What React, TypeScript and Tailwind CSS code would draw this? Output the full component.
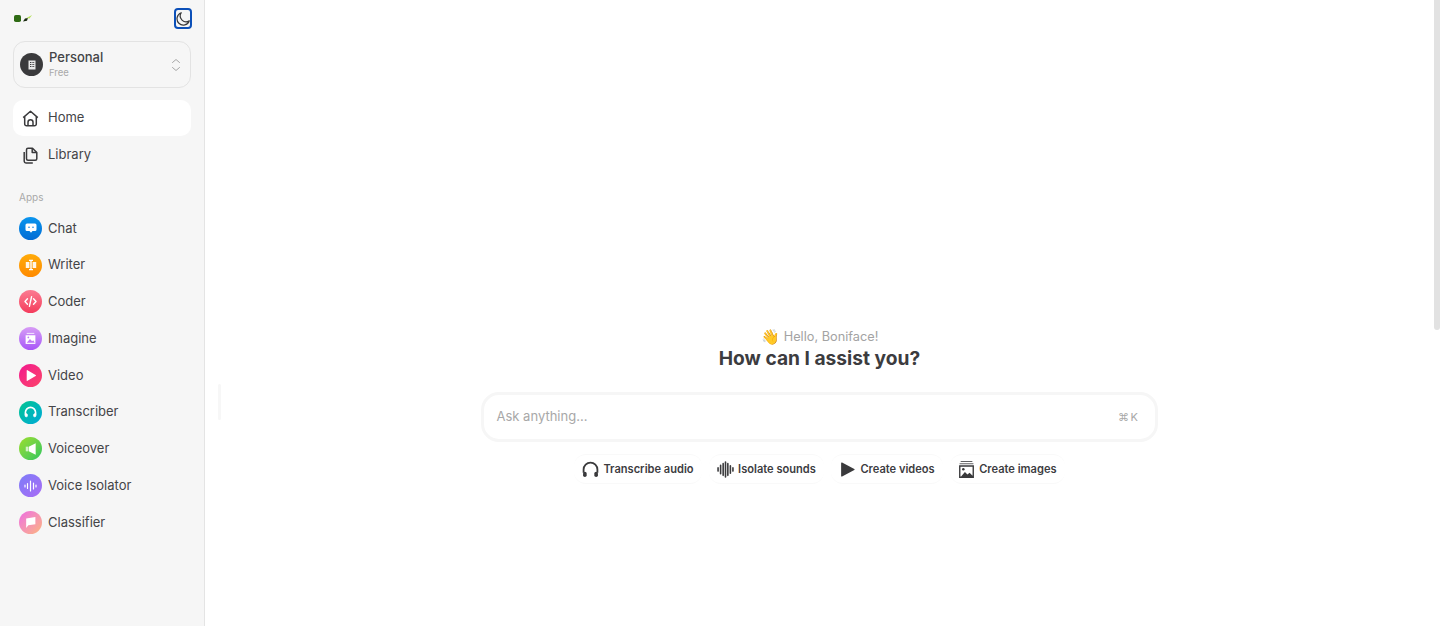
import React from 'react';

const apps: { name: string; bg: string; icon: React.ReactNode }[] = [
  {
    name: 'Chat',
    bg: 'bg-gradient-to-b from-[#0b95ee] to-[#046cd4]',
    icon: (
      <svg viewBox="0 0 12 12" className="h-[12px] w-[12px]">
        <path fill="#fff" d="M2 1.5h8A1.5 1.5 0 0 1 11.5 3v4.5A1.5 1.5 0 0 1 10 9H7.5L6 10.8 4.5 9H2A1.5 1.5 0 0 1 .5 7.5V3A1.5 1.5 0 0 1 2 1.5z" />
        <circle cx="4" cy="5.2" r=".8" fill="#0b80e0" />
        <circle cx="8" cy="5.2" r=".8" fill="#0b80e0" />
      </svg>
    ),
  },
  {
    name: 'Writer',
    bg: 'bg-gradient-to-b from-[#ffab0a] to-[#ff8a00]',
    icon: (
      <svg viewBox="0 0 12 12" className="h-[12px] w-[12px]">
        <path fill="#fff" opacity=".9" d="M.8 3h3.6v6H.8zM7.6 3h3.6v6H7.6z" />
        <path fill="#fff" d="M4 .8h4V2H6.7v8H8v1.2H4V10h1.3V2H4z" />
      </svg>
    ),
  },
  {
    name: 'Coder',
    bg: 'bg-gradient-to-b from-[#fb7a92] to-[#f43a5c]',
    icon: (
      <svg viewBox="0 0 12 12" className="h-[13px] w-[13px]" fill="none" stroke="#fff" strokeWidth="1.3" strokeLinecap="round" strokeLinejoin="round">
        <path d="M3.2 3.5.9 6l2.3 2.5M8.8 3.5 11.1 6 8.8 8.5M7 1.5 5 10.5" />
      </svg>
    ),
  },
  {
    name: 'Imagine',
    bg: 'bg-gradient-to-b from-[#d79bf5] to-[#a855f7]',
    icon: (
      <svg viewBox="0 0 12 12" className="h-[13px] w-[13px]">
        <path fill="#fff" opacity=".75" d="M2.5 .8h7v1h-7z" />
        <path fill="#fff" d="M1.5 3h9v8h-9z" />
        <path fill="#c07cf5" d="M2.5 10 5.5 6.5 7.5 8.5 8.5 7.5 10 10z" />
        <circle cx="4" cy="5" r=".8" fill="#c07cf5" />
      </svg>
    ),
  },
  {
    name: 'Video',
    bg: 'bg-gradient-to-br from-[#f2108e] to-[#fd4268]',
    icon: (
      <svg viewBox="0 0 12 12" className="h-[13px] w-[13px]">
        <path fill="#fff" d="M2.5 1.5v9a.5.5 0 0 0 .75.43l7.5-4.5a.5.5 0 0 0 0-.86l-7.5-4.5a.5.5 0 0 0-.75.43z" />
      </svg>
    ),
  },
  {
    name: 'Transcriber',
    bg: 'bg-gradient-to-br from-[#0bc48e] to-[#08a9d8]',
    icon: (
      <svg viewBox="0 0 12 12" className="h-[13px] w-[13px]" fill="none" stroke="#fff" strokeWidth="1.5" strokeLinecap="round">
        <path d="M1.3 8V6a4.7 4.7 0 0 1 9.4 0v2" />
        <rect x="1" y="7.2" width="2.2" height="2.8" rx="1.1" fill="#fff" strokeWidth=".6" />
        <rect x="8.8" y="7.2" width="2.2" height="2.8" rx="1.1" fill="#fff" strokeWidth=".6" />
      </svg>
    ),
  },
  {
    name: 'Voiceover',
    bg: 'bg-gradient-to-br from-[#9ade28] to-[#1fc65c]',
    icon: (
      <svg viewBox="0 0 12 12" className="h-[14px] w-[14px]">
        <path fill="#fff" opacity=".7" d="M1.5 4h2v4h-2z" />
        <path fill="#fff" d="M4 4 10 1v10L4 8z" />
      </svg>
    ),
  },
  {
    name: 'Voice Isolator',
    bg: 'bg-gradient-to-br from-[#7c7cf8] to-[#a86bf5]',
    icon: (
      <svg viewBox="0 0 13 12" className="h-[12px] w-[13px]" stroke="#fff" strokeWidth="1.2" strokeLinecap="round">
        <path d="M1 5v2M3.5 3.5v5M6.5 1v10M9.5 3v6M12 5v2" />
      </svg>
    ),
  },
  {
    name: 'Classifier',
    bg: 'bg-gradient-to-br from-[#ee6ae0] to-[#fdb47a]',
    icon: (
      <svg viewBox="0 0 12 12" className="h-[13px] w-[13px]">
        <path fill="#fff" d="M2 2.2 10.5 1v6.5L4 8.5 2 11z" />
      </svg>
    ),
  },
];

const Sidebar: React.FC = () => (
  <aside className="flex h-[626px] w-[205px] shrink-0 flex-col border-r border-[#e4e4e4] bg-[#f6f6f6] pl-[13px] pr-[13px]">
    {/* Logo + theme toggle */}
    <div className="flex h-[41px] items-start justify-between pt-[8px]">
      <svg viewBox="0 0 18 7" className="ml-[1px] mt-[7px] h-[7px] w-[18px]">
        <rect x="0" y="0" width="7" height="7" rx="1.8" fill="#2f6b14" />
        <path d="M9 6.5 11 3.5l3-.5-1 2.8z" fill="#1a2a10" />
        <path d="M12.5 3 18 0l-2.5 3.5z" fill="#b4e05a" />
      </svg>
      <div className="-mr-[1px] flex h-[21px] w-[18px] items-center justify-center rounded-[4px] border-2 border-[#0b4fb8]">
        <svg viewBox="0 0 16 16" className="h-[16px] w-[15px]" fill="none" stroke="#3a3a3c" strokeWidth="1.4" strokeLinejoin="round">
          <path d="M6 .9A7.2 7.2 0 1 0 15.2 10 6.6 6.6 0 0 1 6 .9z" />
        </svg>
      </div>
    </div>

    {/* Workspace */}
    <div className="flex h-[47px] items-center gap-[6px] rounded-xl border border-[#e3e3e3] pl-[6px] pr-[9px]">
      <div className="flex h-[23px] w-[23px] items-center justify-center rounded-full bg-[#3a3a3c]">
        <svg viewBox="0 0 10 10" className="h-[10px] w-[10px]">
          <path fill="#e8e8e8" fillRule="evenodd" d="M1.5 .5h7v9h-7zM3 2v1h1V2zM4.6 2v1h1V2zM6.2 2v1h1V2zM3 4v1h1V4zM4.6 4v1h1V4zM6.2 4v1h1V4zM3 6v1h1V6zM4.6 6v1h1V6zM6.2 6v1h1V6z" />
        </svg>
      </div>
      <div className="flex flex-1 flex-col">
        <span className="text-[13px] font-medium leading-[14px] text-[#444447]">Personal</span>
        <span className="mt-[2px] text-[9.5px] leading-[13px] text-[#a9a9a9]">Free</span>
      </div>
      <svg viewBox="0 0 10 14" className="h-[14px] w-[10px]" fill="none" stroke="#a6a6a6" strokeWidth="1" strokeLinecap="round" strokeLinejoin="round">
        <path d="M1.5 4.5 5 1.5l3.5 3M1.5 9.5 5 12.5l3.5-3" />
      </svg>
    </div>

    {/* Main nav */}
    <nav className="mt-[12px] flex flex-col gap-[1px]">
      <div className="flex h-[36px] items-center gap-[9px] rounded-[10px] bg-white pl-[9px]">
        <svg viewBox="0 0 17 17" className="h-[17px] w-[17px]" fill="none" stroke="#3a3a3c" strokeWidth="1.5" strokeLinejoin="round">
          <path d="M1.2 7.6 8.5 1.2l7.3 6.4M2.7 6.4v7.6a1.8 1.8 0 0 0 1.8 1.8h8a1.8 1.8 0 0 0 1.8-1.8V6.4" />
          <path d="M6 15.8v-3.6a2.5 2.5 0 0 1 5 0v3.6" />
        </svg>
        <span className="text-[13px] text-[#444447]">Home</span>
      </div>
      <div className="flex h-[36px] items-center gap-[9px] pl-[9px]">
        <svg viewBox="0 0 17 17" className="h-[17px] w-[17px]" fill="none" stroke="#3a3a3c" strokeWidth="1.5" strokeLinejoin="round">
          <path d="M6 1.2h4.5l4.3 4.3v6.3a1.5 1.5 0 0 1-1.5 1.5H6a1.5 1.5 0 0 1-1.5-1.5V2.7A1.5 1.5 0 0 1 6 1.2z" />
          <path d="M10.2 1.4v4.2h4.4" />
          <path d="M2.2 5v9a2 2 0 0 0 2 2h6.6" />
        </svg>
        <span className="text-[13px] text-[#444447]">Library</span>
      </div>
    </nav>

    <div className="mt-[16px] pl-[6px] text-[10px] leading-[16px] text-[#a9a9a9]">Apps</div>

    {/* Apps */}
    <div className="mt-[5px] flex flex-col">
      {apps.map((app) => (
        <div key={app.name} className="flex h-[36.75px] items-center gap-[6px] pl-[6px]">
          <div className={`flex h-[23px] w-[23px] items-center justify-center rounded-full ${app.bg}`}>{app.icon}</div>
          <span className="text-[13px] text-[#444447]">{app.name}</span>
        </div>
      ))}
    </div>
  </aside>
);

const suggestions: { label: string; icon: React.ReactNode }[] = [
  {
    label: 'Transcribe audio',
    icon: (
      <svg viewBox="0 0 16 16" className="h-[17px] w-[17px]" fill="none" stroke="#3a3a3c" strokeWidth="1.7">
        <path d="M1.5 11V8a6.5 6.5 0 0 1 13 0v3" />
        <rect x="1" y="10" width="3.4" height="5" rx="1.7" fill="#3a3a3c" stroke="none" />
        <rect x="11.6" y="10" width="3.4" height="5" rx="1.7" fill="#3a3a3c" stroke="none" />
      </svg>
    ),
  },
  {
    label: 'Isolate sounds',
    icon: (
      <svg viewBox="0 0 16 16" className="h-[17px] w-[17px]" stroke="#3a3a3c" strokeWidth="1.5" strokeLinecap="round">
        <path d="M1 6.5v3M3.4 4v8M5.8 2.5v11M8 1v14M10.2 2.5v11M12.6 4.5v7M15 6.5v3" />
      </svg>
    ),
  },
  {
    label: 'Create videos',
    icon: (
      <svg viewBox="0 0 16 16" className="h-[17px] w-[17px]">
        <path fill="#3a3a3c" d="M2 2v12a.6.6 0 0 0 .9.5l11.5-6a.6.6 0 0 0 0-1L2.9 1.5A.6.6 0 0 0 2 2z" />
      </svg>
    ),
  },
  {
    label: 'Create images',
    icon: (
      <svg viewBox="0 0 16 16" className="h-[17px] w-[17px]">
        <path fill="#3a3a3c" opacity=".8" d="M2.5 0h11v1h-11zM1.5 2h13v1h-13z" />
        <path fill="#3a3a3c" fillRule="evenodd" d="M1 4h14v12H1zM2.3 5.3v9.4h.6l3.6-4.4 2.4 2.3 2-1.6 2.8 2.8V5.3z" />
        <circle cx="5" cy="7.8" r="1.2" fill="#3a3a3c" />
      </svg>
    ),
  },
];

export default function App() {
  return (
    <div className="flex h-[626px] overflow-hidden bg-white font-['Inter',sans-serif]">
      <Sidebar />

      {/* Sidebar resize handle + page scrollbar */}
      <div className="relative flex-1">
        <div className="absolute left-[13px] top-[384px] h-[36px] w-[3px] rounded-full bg-[#f7f7f7]" />
        <div className="absolute right-0 top-0 h-[330px] w-[6px] rounded-b-sm bg-[#e2e2e2]" />

        <main className="flex flex-col items-center pr-[6px] pt-[327px]">
          <div className="flex h-[20px] items-center gap-[4px]">
            <span className="text-[15px] leading-[20px]">👋</span>
            <span className="text-[12.75px] text-[#a3a3a3]">Hello, Boniface!</span>
          </div>
          <h1 className="mt-[-1px] text-[19.2px] font-bold leading-[24px] text-[#3c3c3f]">How can I assist you?</h1>

          <div className="mr-[1px] mt-[22px] flex h-[50px] w-[677px] items-center justify-between rounded-[18px] border-[3px] border-[#f6f6f6] pl-[13px] pr-[15px]">
            <span className="text-[13px] text-[#a8a8a8]">Ask anything...</span>
            <span className="text-[11px] tracking-[1.5px] text-[#a8a8a8]">⌘K</span>
          </div>

          <div className="mt-[12px] flex items-center gap-[7.5px]">
            {suggestions.map((s) => (
              <div key={s.label} className="flex h-[30px] items-center gap-[4px] rounded-[12px] border-y border-[#f9f9f9] px-[8px]">
                {s.icon}
                <span className="text-[11.1px] font-semibold text-[#3c3c3f]">{s.label}</span>
              </div>
            ))}
          </div>
        </main>
      </div>
    </div>
  );
}
